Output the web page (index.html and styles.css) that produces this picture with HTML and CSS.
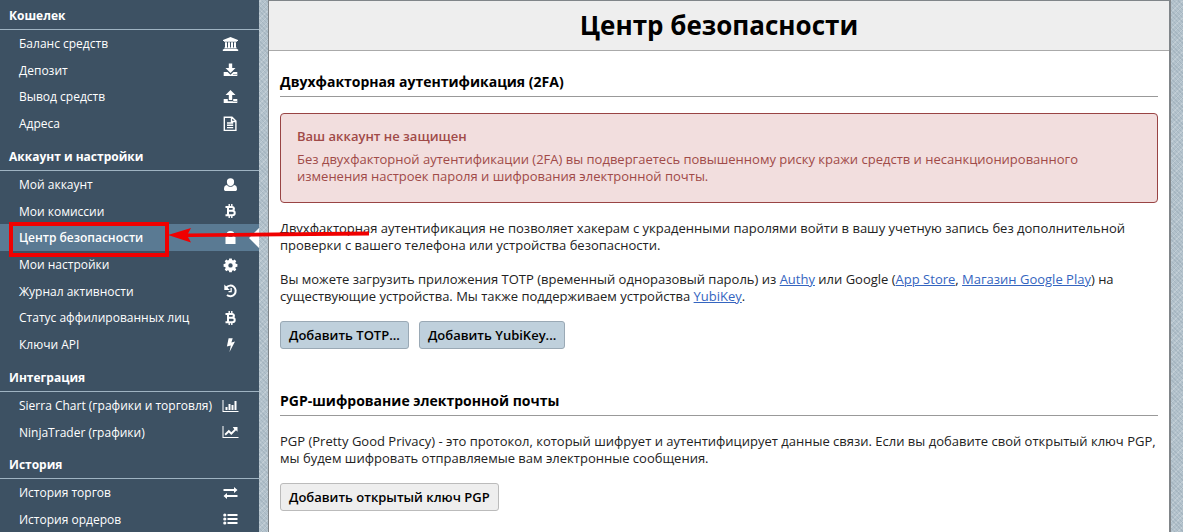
FILE: index.html
```html
<!DOCTYPE html>
<html lang="ru">
<head>
<meta charset="utf-8">
<title>Центр безопасности</title>
<link rel="stylesheet" href="styles.css">
</head>
<body>
<svg class="sprite" aria-hidden="true">
  <symbol id="bank" viewBox="0 0 16 16"><path d="M8 1 15.500 4v1H14.500v.7H1.500V5H.5V4zM2.500 6.300h2v5.200h1V6.300h2v5.200h1V6.300h2v5.200h1V6.300h2v5.200h.7v1H1.800v-1h.7zM1 13h14v.6h.7V15H.3v-1.400H1z"/></symbol>
  <symbol id="download" viewBox="0 0 16 16"><path d="M6.300 1.500h3.400V6H13L8 11 3 6h3.300zM1.200 10h3.900L8 12.700 10.900 10h3.900v4H1.200zM11 12v1h1v-1zm2 0v1h1v-1z" fill-rule="evenodd"/></symbol>
  <symbol id="upload" viewBox="0 0 16 16"><path d="M8 1l5 5H9.700v5H6.300V6H3zM1.200 10H5.300v2.200h5.400V10h4.100v4H1.200zM11 12v1h1v-1zm2 0v1h1v-1z" fill-rule="evenodd"/></symbol>
  <symbol id="file" viewBox="0 0 16 16"><path d="M1.800 1.200h7.700l3.900 3.900v9.300H1.800zM9 1.500v4h4M4.500 7h6.200M4.500 9.300h6.200M4.500 11.600h6.200" fill="none" stroke="currentColor" stroke-width="1.400"/></symbol>
  <symbol id="user" viewBox="0 0 16 16"><path d="M8 1.200a3.600 3.600 0 0 1 3.600 3.700C11.600 7.500 10 9 8 9S4.400 7.500 4.400 4.900A3.600 3.600 0 0 1 8 1.200zM4.400 8C5.500 9.300 6.600 9.800 8 9.800S10.500 9.300 11.600 8c2.200.2 2.900 2 2.900 4.200 0 1.100-.7 1.900-1.800 1.900H3.300c-1.100 0-1.800-.8-1.800-1.900C1.500 10 2.200 8.200 4.400 8z"/></symbol>
  <symbol id="btc" viewBox="0 0 16 16"><path d="M3 3.900h2.300m-2.300 8.300h2.300M5.500 3.700v8.700M5.300 3.900h3.900c3 0 3 3.900 0 3.900H5.800h3.800c3.500 0 3.500 4.400 0 4.400H5.300" fill="none" stroke="currentColor" stroke-width="2"/><path d="M6 1h1.400v3H6zM8.600 1H10v3H8.600zM6 12h1.400v3H6zM8.600 12H10v3H8.600z"/></symbol>
  <symbol id="lock" viewBox="0 0 16 16"><path d="M3 7h1V5a4 4 0 0 1 8 0v2h1v7H3zm3 0h4V5a2 2 0 0 0-4 0z"/></symbol>
  <symbol id="gear" viewBox="0 0 16 16"><path d="M6.700 1.500h2.600l.3 1.600 1.100.5 1.400-1 1.700 1.700-1 1.400.5 1.100 1.600.3v2.600l-1.600.3-.5 1.100 1 1.400-1.700 1.700-1.400-1-1.100.5-.3 1.600H6.700l-.3-1.600-1.100-.5-1.400 1-1.700-1.700 1-1.400-.5-1.100-1.600-.3V7.100l1.600-.3.5-1.100-1-1.400 1.700-1.700 1.400 1 1.100-.5zM8 6.200a2.200 2.200 0 1 0 0 4.400A2.200 2.200 0 0 0 8 6.200z" fill-rule="evenodd"/></symbol>
  <symbol id="history" viewBox="0 0 16 16"><path d="M3.800 4.500A5.300 5.300 0 1 1 4.500 12" fill="none" stroke="currentColor" stroke-width="2"/><path d="M1.800 1.500V7h5.500zM8 5h1.300v4.300H6V8h2z"/></symbol>
  <symbol id="bolt" viewBox="0 0 16 16"><path d="M6.100 1.300h4.100L8.900 5.400l3.600-.8L7 15l1.300-6.500-3.900 1z"/></symbol>
  <symbol id="bars" viewBox="0 0 16 16"><path d="M0 2h1v11h15v1H0zM3 9h2v3H3zM6 6h2v6H6zM9 7h2v5H9zM12 3h2v9h-2z"/></symbol>
  <symbol id="line" viewBox="0 0 16 16"><path d="M0 2h1v11h15v1H0zM10.300 3H15v4.700l-1.500-1.500-4.700 4.700-2.500-2.500-3 3-1.300-1.300 4.300-4.300L8.800 8.300l3-3z"/></symbol>
  <symbol id="swap" viewBox="0 0 16 16"><path d="M1 4h10.500V2L15 5l-3.500 3V6H1zM15 10H4.500V8L1 11l3.500 3v-2H15z"/></symbol>
  <symbol id="list" viewBox="0 0 16 16"><path d="M5 3h10v2H5zM5 7h10v2H5zM5 11h10v2H5z"/><circle cx="2.300" cy="4" r="1.600"/><circle cx="2.300" cy="8" r="1.600"/><circle cx="2.300" cy="12" r="1.600"/></symbol>
</svg>
<div class="page">
  <nav class="sidebar">
    <h2 class="group">Кошелек</h2>
    <ul class="menu">
      <li><a href="#">Баланс средств<svg class="icon"><use href="#bank"/></svg></a></li>
      <li><a href="#">Депозит<svg class="icon"><use href="#download"/></svg></a></li>
      <li><a href="#">Вывод средств<svg class="icon"><use href="#upload"/></svg></a></li>
      <li><a href="#">Адреса<svg class="icon"><use href="#file"/></svg></a></li>
    </ul>
    <h2 class="group">Аккаунт и настройки</h2>
    <ul class="menu">
      <li><a href="#">Мой аккаунт<svg class="icon"><use href="#user"/></svg></a></li>
      <li><a href="#">Мои комиссии<svg class="icon"><use href="#btc"/></svg></a></li>
      <li><a class="active" href="#">Центр безопасности<svg class="icon"><use href="#lock"/></svg></a></li>
      <li><a href="#">Мои настройки<svg class="icon"><use href="#gear"/></svg></a></li>
      <li><a href="#">Журнал активности<svg class="icon"><use href="#history"/></svg></a></li>
      <li><a href="#">Статус аффилированных лиц<svg class="icon"><use href="#btc"/></svg></a></li>
      <li><a href="#">Ключи API<svg class="icon"><use href="#bolt"/></svg></a></li>
    </ul>
    <h2 class="group">Интеграция</h2>
    <ul class="menu">
      <li><a href="#">Sierra Chart (графики и торговля)<svg class="icon"><use href="#bars"/></svg></a></li>
      <li><a href="#">NinjaTrader (графики)<svg class="icon"><use href="#line"/></svg></a></li>
    </ul>
    <h2 class="group">История</h2>
    <ul class="menu">
      <li><a href="#">История торгов<svg class="icon"><use href="#swap"/></svg></a></li>
      <li><a href="#">История ордеров<svg class="icon"><use href="#list"/></svg></a></li>
    </ul>
  </nav>
  <main class="card">
    <h1 class="title">Центр безопасности</h1>
    <section class="section">
      <h2 class="heading">Двухфакторная аутентификация (2FA)</h2>
      <div class="alert">
        <h3 class="alert-title">Ваш аккаунт не защищен</h3>
        <p>Без двухфакторной аутентификации (2FA) вы подвергаетесь повышенному риску кражи средств и несанкционированного изменения настроек пароля и шифрования электронной почты.</p>
      </div>
      <p class="text">Двухфакторная аутентификация не позволяет хакерам с украденными паролями войти в вашу учетную запись без дополнительной проверки с вашего телефона или устройства безопасности.</p>
      <p class="text">Вы можете загрузить приложения TOTP (временный одноразовый пароль) из <a href="#">Authy</a> или Google (<a href="#">App Store</a>, <a href="#">Магазин Google Play</a>) на существующие устройства. Мы также поддерживаем устройства <a href="#">YubiKey</a>.</p>
      <div class="actions">
        <button class="btn primary" type="button">Добавить TOTP...</button>
        <button class="btn primary" type="button">Добавить YubiKey...</button>
      </div>
    </section>
    <section class="section">
      <h2 class="heading">PGP-шифрование электронной почты</h2>
      <p class="text">PGP (Pretty Good Privacy) - это протокол, который шифрует и аутентифицирует данные связи. Если вы добавите свой открытый ключ PGP, мы будем шифровать отправляемые вам электронные сообщения.</p>
      <div class="actions">
        <button class="btn" type="button">Добавить открытый ключ PGP</button>
      </div>
    </section>
  </main>
</div>
<svg class="callout" viewBox="0 0 370 40" aria-hidden="true">
  <rect x="11" y="4" width="156" height="31" fill="none" stroke="#f00000" stroke-width="4"/>
  <path d="M168 15l23-7-3 5.500 181-2v4l-181 1.500 3 5.500z" fill="#f00000"/>
</svg>
</body>
</html>
```
FILE: styles.css
```css
* { box-sizing: border-box; }

body {
  margin: 0;
  position: relative;
  font-family: "Open Sans", "Noto Sans", sans-serif;
  font-size: 13px;
  line-height: 17px;
  color: #222;
  background-color: #b3c2cc;
  background-image:
    repeating-linear-gradient(45deg, rgba(90, 112, 128, 0.15) 0 1px, transparent 1px 3px),
    repeating-linear-gradient(-45deg, rgba(255, 255, 255, 0.2) 0 1px, transparent 1px 4px);
}

h1, h2, h3, p, ul { margin: 0; padding: 0; }

.sprite { display: none; }

.page {
  display: flex;
  min-height: 100vh;
}

.sidebar {
  flex: 0 0 259px;
  background: #3d5163;
  color: #fff;
}

.group {
  padding: 7px 9px 0;
  border-bottom: 1px solid #9fb3c2;
  font-size: 12px;
  line-height: 26px;
}

.group:first-child { padding-top: 3px; }

.menu { list-style: none; }

.menu li {
  display: flex;
  height: 27px;
}

.menu li:nth-child(3n + 2) { height: 26px; }

.menu a {
  position: relative;
  flex: 1;
  display: flex;
  align-items: center;
  justify-content: space-between;
  padding: 0 20px 0 19px;
  color: #fff;
  font-size: 12px;
  text-decoration: none;
}

.menu .active {
  background: #5a7a93;
  font-weight: 600;
}

.active::after {
  content: "";
  position: absolute;
  right: 0;
  top: 4px;
  border: 10px solid transparent;
  border-right-color: #fff;
  border-left: 0;
}

.icon {
  width: 17px;
  height: 16px;
  fill: currentColor;
}

.card {
  flex: 1;
  margin: 0 12px 0 9px;
  border: 1px solid #808589;
  border-bottom: 0;
  border-right-width: 2px;
  background: #fff;
}

.title {
  background: #eee;
  border-bottom: 1px solid #aaa;
  color: #000;
  font-size: 26px;
  line-height: 49px;
  text-align: center;
}

.section { padding: 21px 11px 22px; }

.section + .section { padding-top: 19px; }

.heading {
  padding-bottom: 4px;
  border-bottom: 1px solid #999;
  color: #000;
  font-size: 14px;
  line-height: 20px;
}

.alert {
  margin: 16px 0;
  padding: 14px 16px 17px;
  border: 1px solid #944;
  border-radius: 4px;
  background: #f2dede;
  color: #a04a48;
}

.alert-title {
  margin-bottom: 6px;
  font-size: 13px;
  font-weight: 600;
}

.text { margin: 17px 0 16px; }

.text a { color: #3465c0; }

.actions {
  display: flex;
  gap: 10px;
}

.btn {
  height: 28px;
  padding: 0 8px 1px;
  border: 1px solid #bbb;
  border-radius: 3px;
  background: #eee;
  color: #000;
  font: 600 13px "Open Sans", "Noto Sans", sans-serif;
}

.primary {
  border-color: #9aa9b5;
  background: #bfd0dc;
}

.section + .section .heading { margin-top: 1px; }

.callout {
  position: absolute;
  left: 0;
  top: 220px;
  width: 370px;
  height: 40px;
}
```
